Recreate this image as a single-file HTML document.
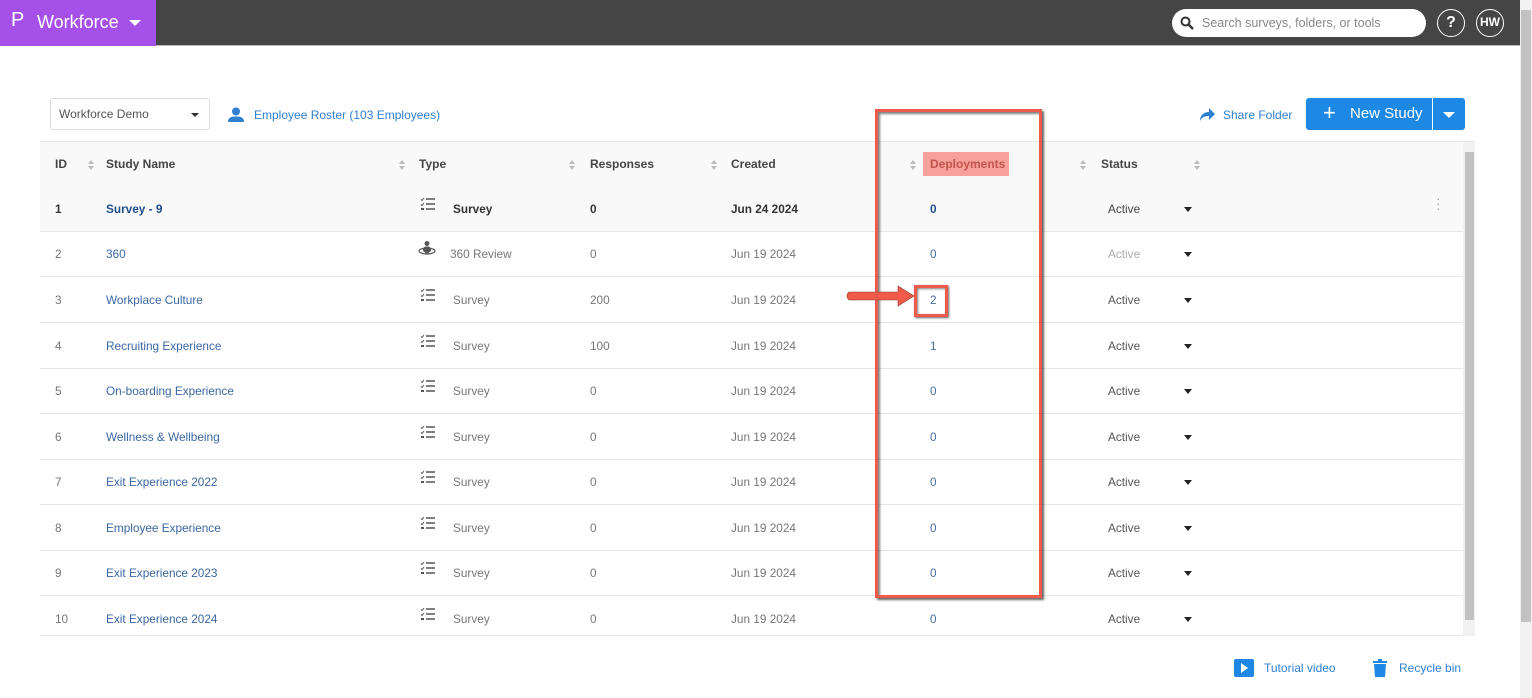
<!DOCTYPE html>
<html><head><meta charset="utf-8"><style>
*{box-sizing:border-box;margin:0;padding:0}
body{width:1532px;height:698px;overflow:hidden;background:#fff;font-family:"Liberation Sans",sans-serif;position:relative;font-size:12px;color:#555}
.top{position:absolute;left:0;top:0;width:1520px;height:46px;background:#454545;border-bottom:1px solid #bbb}
.brand{position:absolute;left:0;top:0;width:156px;height:46px;background:#a550e8;color:#fff;font-size:18px}
.search{position:absolute;left:1172px;top:9px;width:254px;height:28px;background:#fff;border-radius:14px;color:#888;font-size:12.5px;line-height:28px;padding-left:30px}
.circ{position:absolute;top:9px;width:28px;height:28px;border:1.5px solid #fff;border-radius:50%;color:#fff;font-weight:bold;text-align:center;line-height:25px}
.abs{position:absolute}
.blue{color:#2f7fd1}
.row{position:absolute;left:40px;width:1423px;height:46px;border-bottom:1px solid #e6e6e6}
.row span{position:absolute;top:16px;font-size:11.8px;color:#777}
.row .nm{color:#3a67a3}
.hd span{position:absolute;top:15px;font-weight:bold;color:#444;font-size:12px}
.sort{position:absolute;top:18px;width:6px;height:10px}
.sort:before{content:"";position:absolute;left:0;top:0;border:3px solid transparent;border-bottom:4px solid #bbb;border-top:0}
.sort:after{content:"";position:absolute;left:0;top:6px;border:3px solid transparent;border-top:4px solid #bbb;border-bottom:0}
.car{position:absolute;top:21px;left:1144px;border:4px solid transparent;border-top:5px solid #222;border-bottom:0}
</style></head><body>
<div class="top">
 <div class="brand"><span style="position:absolute;left:11px;top:9px;font-size:20px">P</span><span style="position:absolute;left:37px;top:12px">Workforce</span><span style="position:absolute;left:129px;top:20px;border:6px solid transparent;border-top:6px solid #fff;border-bottom:0"></span></div>
 <div class="search"><svg class="abs" style="left:8px;top:7px" width="14" height="14" viewBox="0 0 14 14"><circle cx="5.5" cy="5.5" r="4" fill="none" stroke="#333" stroke-width="2"/><path d="M8.5 8.5L13 13" stroke="#333" stroke-width="2.4"/></svg>Search surveys, folders, or tools</div>
 <div class="circ" style="left:1437px;font-size:16px">?</div>
 <div class="circ" style="left:1476px;font-size:12px">HW</div>
</div>
<div class="abs" style="left:1520px;top:0;width:12px;height:698px;background:#f1f1f1"><div class="abs" style="left:1px;top:10px;width:10px;height:612px;background:#c1c1c1"></div></div>

<div class="abs" style="left:50px;top:98px;width:160px;height:32px;border:1px solid #ddd;border-radius:3px;color:#555;line-height:30px;padding-left:8px">Workforce Demo<span class="abs" style="left:140px;top:14px;border:4px solid transparent;border-top:4px solid #333;border-bottom:0"></span></div>
<svg class="abs" style="left:228px;top:107px" width="16" height="16" viewBox="0 0 16 16"><circle cx="8" cy="4.5" r="4" fill="#2f7fd1"/><path d="M0 15C0 10 4 9.5 8 9.5S16 10 16 15Z" fill="#2f7fd1"/></svg>
<div class="abs blue" style="left:254px;top:108px">Employee Roster (103 Employees)</div>
<svg class="abs" style="left:1199px;top:107px" width="16" height="14" viewBox="0 0 16 14"><path d="M1 14C1 8 5 5 10 5V1L16 7 10 13V9C6 9 3 10 1 14Z" fill="#2f7fd1"/></svg>
<div class="abs blue" style="left:1223px;top:108px">Share Folder</div>
<div class="abs" style="left:1306px;top:98px;width:126px;height:32px;background:#1e88e5;border-radius:3px 0 0 3px;color:#fff;font-size:15px;line-height:32px"><span style="position:absolute;left:17px;font-size:22px;top:-1px;font-weight:300">+</span><span style="position:absolute;left:44px">New Study</span></div>
<div class="abs" style="left:1433px;top:98px;width:32px;height:32px;background:#1e88e5;border-radius:0 3px 3px 0"><span class="abs" style="left:10px;top:14px;border:6px solid transparent;border-top:6px solid #fff;border-bottom:0"></span></div>

<div class="abs" style="left:40px;top:141px;width:1435px;height:495px;overflow:hidden;border-top:1px solid #e6e6e6">
 <div class="abs" style="left:1423px;top:0;width:12px;height:495px;background:#f1f1f1"><div class="abs" style="left:2px;top:10px;width:9px;height:468px;background:#c1c1c1"></div></div>
 <div class="row hd" style="left:0;top:0;background:#f9f9f9;height:45px">
  <span style="left:15px">ID</span><i class="sort" style="left:48px"></i>
  <span style="left:66px">Study Name</span><i class="sort" style="left:359px"></i>
  <span style="left:379px">Type</span><i class="sort" style="left:529px"></i>
  <span style="left:550px">Responses</span><i class="sort" style="left:671px"></i>
  <span style="left:691px">Created</span><i class="sort" style="left:870px"></i>
  <div class="abs" style="left:883px;top:10px;width:86px;height:24px;background:#f8a19b"></div>
  <span style="left:890px;color:#c0554c">Deployments</span><i class="sort" style="left:1040px"></i>
  <span style="left:1061px">Status</span><i class="sort" style="left:1154px"></i>
 </div>
</div>
<div id="rows"></div>
<script>
var d=[["1","Survey - 9","Survey","0","Jun 24 2024","0"],["2","360","360 Review","0","Jun 19 2024","0"],["3","Workplace Culture","Survey","200","Jun 19 2024","2"],["4","Recruiting Experience","Survey","100","Jun 19 2024","1"],["5","On-boarding Experience","Survey","0","Jun 19 2024","0"],["6","Wellness &amp; Wellbeing","Survey","0","Jun 19 2024","0"],["7","Exit Experience 2022","Survey","0","Jun 19 2024","0"],["8","Employee Experience","Survey","0","Jun 19 2024","0"],["9","Exit Experience 2023","Survey","0","Jun 19 2024","0"],["10","Exit Experience 2024","Survey","0","Jun 19 2024","0"]];
var ys=[186,231,277,323,368,414,459,505,550,596],h="";
var surv='<svg style="position:absolute;left:380px;top:11px" width="16" height="14" viewBox="0 0 16 14"><path d="M1 2.5l1 1 2-2.5M1 7.5l1 1 2-2.5" stroke="#555" fill="none"/><rect x="1" y="11" width="3" height="2" fill="#555"/><path d="M6 2h9M6 7h9M6 12h9" stroke="#555" stroke-width="1.5"/></svg>';
var rev='<svg style="position:absolute;left:378px;top:10px" width="18" height="16" viewBox="0 0 18 16"><circle cx="9" cy="2.5" r="2.5" fill="#555"/><path d="M5 10C5 6 6.5 5.5 9 5.5S13 6 13 10L9 13Z" fill="#555"/><ellipse cx="9" cy="10" rx="8" ry="3" fill="none" stroke="#555" stroke-width="1.2"/></svg>';
d.forEach(function(r,i){var b=i==0;var st=b?'font-weight:bold;color:#333':'';var h2=ys[i]+46>636?636-ys[i]:46;
h+='<div class="row" style="top:'+ys[i]+'px;height:'+h2+'px;'+(b?'background:#f9f9f9':'')+';overflow:hidden">'+
'<span style="left:15px;'+st+'">'+r[0]+'</span><span class="nm" style="left:66px;'+(b?'font-weight:bold;color:#1f4e8c':'')+'">'+r[1]+'</span>'+(i==1?rev:surv)+
'<span style="left:'+(i==1?410:413)+'px;'+st+'">'+r[2]+'</span><span style="left:550px;'+st+'">'+r[3]+'</span><span style="left:691px;'+st+'">'+r[4]+'</span>'+
'<span style="left:890px;width:7px;color:'+(b?'#1f4e8c;font-weight:bold':'#4a6f9e')+'">'+r[5]+'</span><span style="left:1068px;'+(i==1?'color:#aaa':(b?'color:#444':'color:#555'))+'">Active</span><i class="car"></i>'+
(b?'<span style="left:1396px;top:10px;color:#aaa;font-size:14px;line-height:5px;width:4px">·<br>·<br>·</span>':'')+'</div>';});
document.getElementById('rows').innerHTML=h;
</script>

<div class="abs" style="left:875px;top:109px;width:167px;height:489px;border:3px solid #f05a4a;box-shadow:2px 2px 2px rgba(0,0,0,.6),inset 2px 2px 2px rgba(0,0,0,.5)"></div>
<div class="abs" style="left:914px;top:285px;width:34px;height:32px;border:3px solid #f05a4a;box-shadow:1px 1px 2px rgba(0,0,0,.6),inset 1px 1px 2px rgba(0,0,0,.5)"></div>
<svg class="abs" style="left:844px;top:283px" width="72" height="26" viewBox="0 0 72 26"><path d="M5 9H54V3L70 13 54 23V17H5Q1 13 5 9Z" fill="#f05a4a" stroke="#8a3a30" stroke-width="0.6" stroke-linejoin="round"/></svg>

<svg class="abs" style="left:1234px;top:659px" width="20" height="18" viewBox="0 0 20 18"><rect width="20" height="18" rx="2" fill="#1e88e5"/><path d="M7 4L14 9 7 14Z" fill="#fff"/></svg>
<div class="abs blue" style="left:1264px;top:661px">Tutorial video</div>
<svg class="abs" style="left:1373px;top:659px" width="14" height="18" viewBox="0 0 14 18"><rect x="0" y="2" width="14" height="2" fill="#1e88e5"/><rect x="5" y="0" width="4" height="2" fill="#1e88e5"/><path d="M1 5H13L12 18H2Z" fill="#1e88e5"/></svg>
<div class="abs blue" style="left:1399px;top:661px">Recycle bin</div>
</body></html>
